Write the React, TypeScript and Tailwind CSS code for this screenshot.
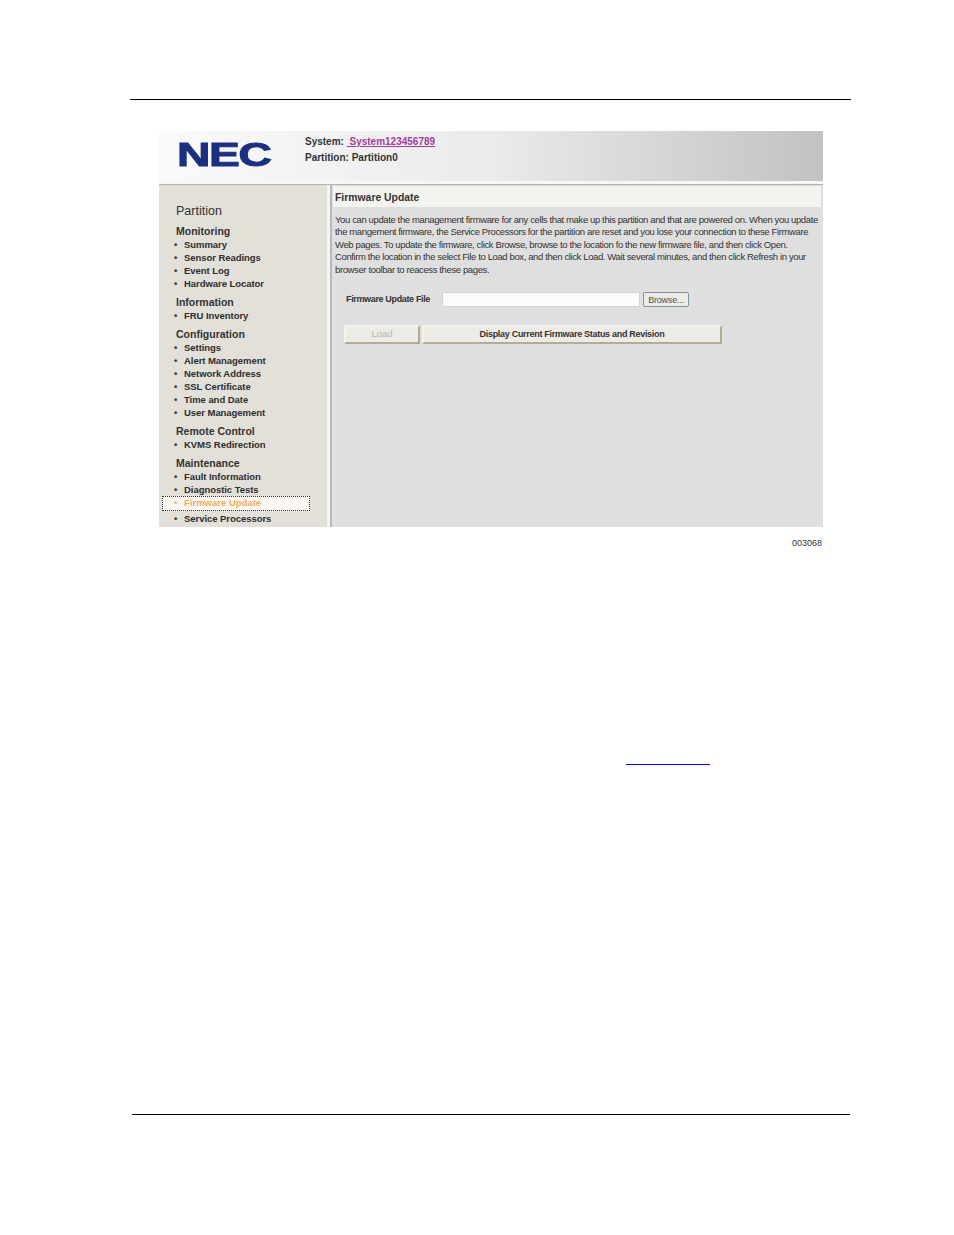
const groups = [
  { title: "Monitoring", items: ["Summary", "Sensor Readings", "Event Log", "Hardware Locator"] },
  { title: "Information", items: ["FRU Inventory"] },
  {
    title: "Configuration",
    items: ["Settings", "Alert Management", "Network Address", "SSL Certificate", "Time and Date", "User Management"],
  },
  { title: "Remote Control", items: ["KVMS Redirection"] },
  { title: "Maintenance", items: ["Fault Information", "Diagnostic Tests", "Firmware Update", "Service Processors"] },
];

const Sidebar = () => (
  <aside className="w-[168px] shrink-0 bg-[#e3dfd9] pt-[18px] text-[#2e2e2e]">
    <h1 className="ml-[17px] h-[16px] text-[12.5px] leading-[16px] text-[#333]">Partition</h1>
    <div className="mt-[5px] flex flex-col gap-[6px]">
      {groups.map((group) => (
        <div key={group.title}>
          <h2 className="ml-[17px] h-[13px] text-[10.5px] font-bold leading-[15px] text-[#333]">{group.title}</h2>
          <ul>
            {group.items.map((item) =>
              item === "Firmware Update" ? (
                <li
                  key={item}
                  className="ml-[3px] mt-[1px] flex h-[15px] w-[148px] items-center border border-dotted border-[#333] bg-[#fbf8f3] pl-[11px] text-[9.5px] font-bold text-[#f0ad5c]"
                >
                  <span className="w-[10px]">•</span>
                  {item}
                </li>
              ) : (
                <li key={item} className="ml-[15px] flex h-[13px] items-center pt-[1px] text-[9.5px] font-bold leading-[13px] tracking-[-0.05px]">
                  <span className="w-[10px]">•</span>
                  {item}
                </li>
              ),
            )}
          </ul>
        </div>
      ))}
    </div>
  </aside>
);

const Content = () => (
  <main className="w-[491px] shrink-0 overflow-hidden bg-[#dfdfdf] pl-[1px] pr-[2px] pt-[1px] text-[#333]">
    <div className="flex h-[21px] items-center bg-[#f3f3f0] pl-[2px] pt-[2px] text-[10.4px] font-bold">Firmware Update</div>
    <p className="mt-[7px] pl-[2px] text-[9.5px] leading-[12.4px] tracking-[-0.38px] whitespace-nowrap">
      You can update the management firmware for any cells that make up this partition and that are powered on. When you update
      <br />
      the mangement firmware, the Service Processors for the partition are reset and you lose your connection to these Firmware
      <br />
      Web pages. To update the firmware, click Browse, browse to the location fo the new firmware file, and then click Open.
      <br />
      Confirm the location in the select File to Load box, and then click Load. Wait several minutes, and then click Refresh in your
      <br />
      browser toolbar to reacess these pages.
    </p>
    <div className="ml-[13px] mt-[16px] flex h-[15px] items-center">
      <span className="w-[96px] text-[9px] font-bold tracking-[-0.35px]">Firmware Update File</span>
      <div className="h-[15px] w-[198px] border border-[#d4d4d4] bg-[#fbfbfb]" />
      <button
        type="button"
        className="ml-[3px] h-[15px] w-[46px] rounded-[2px] border border-[#7f93a8] bg-[#ecebe6] text-[9px] leading-[12px] tracking-[-0.2px] text-[#555]"
      >
        Browse...
      </button>
    </div>
    <div className="ml-[11px] mt-[18px] flex gap-[3px]">
      <button
        type="button"
        className="h-[19px] w-[76px] border-2 border-[#f5f3ee] border-b-[#b5ac98] border-r-[#b5ac98] bg-[#ecebe6] text-[9.5px] text-[#b9b5aa]"
      >
        Load
      </button>
      <button
        type="button"
        className="-ml-px h-[19px] w-[300px] border-2 border-[#f5f3ee] border-b-[#b5ac98] border-r-[#b5ac98] bg-[#ecebe6] text-[9px] font-bold tracking-[-0.3px] text-[#333]"
      >
        Display Current Firmware Status and Revision
      </button>
    </div>
  </main>
);

export default function App() {
  return (
    <div className="h-[1235px] w-[954px] overflow-hidden bg-white pt-[99px] font-['Liberation_Sans',Arial,sans-serif]">
      <div className="ml-[130px] h-px w-[721px] bg-black" />

      <div className="ml-[159px] mt-[31px] w-[664px] blur-[0.4px]">
        <header className="flex h-[50px] bg-gradient-to-r from-[#fafafa] via-[#ebebeb] via-50% to-[#c2c2c2]">
          <div className="flex w-[146px] items-center pb-[4px] pl-[18px]">
            <span className="inline-block origin-left scale-x-[1.36] text-[34px] font-bold leading-none tracking-[-1px] text-[#1c2f80] [-webkit-text-stroke:1px_#1c2f80]">
              NEC
            </span>
          </div>
          <div className="pt-[3px] text-[10px] font-bold leading-[16px] text-[#333]">
            <div>
              System: <span className="text-[#a33c9c] underline">&nbsp;System123456789</span>
            </div>
            <div>Partition: Partition0</div>
          </div>
        </header>
        <div className="h-[3px] bg-[#f7f7f7]" />
        <div className="h-px bg-[#b3b3ad]" />
        <div className="flex h-[342px]">
          <Sidebar />
          <div className="w-[3px] shrink-0 bg-[#f5f5f5]" />
          <div className="w-[2px] shrink-0 bg-[#b9b9b9]" />
          <Content />
        </div>
      </div>

      <p className="ml-[159px] mt-[10px] w-[663px] text-right text-[9px] leading-[12px] text-[#333]">003068</p>

      <div className="ml-[626px] mt-[215px] h-px w-[84px] bg-[#0000ff]" />

      <div className="ml-[132px] mt-[349px] h-px w-[718px] bg-black" />
    </div>
  );
}
